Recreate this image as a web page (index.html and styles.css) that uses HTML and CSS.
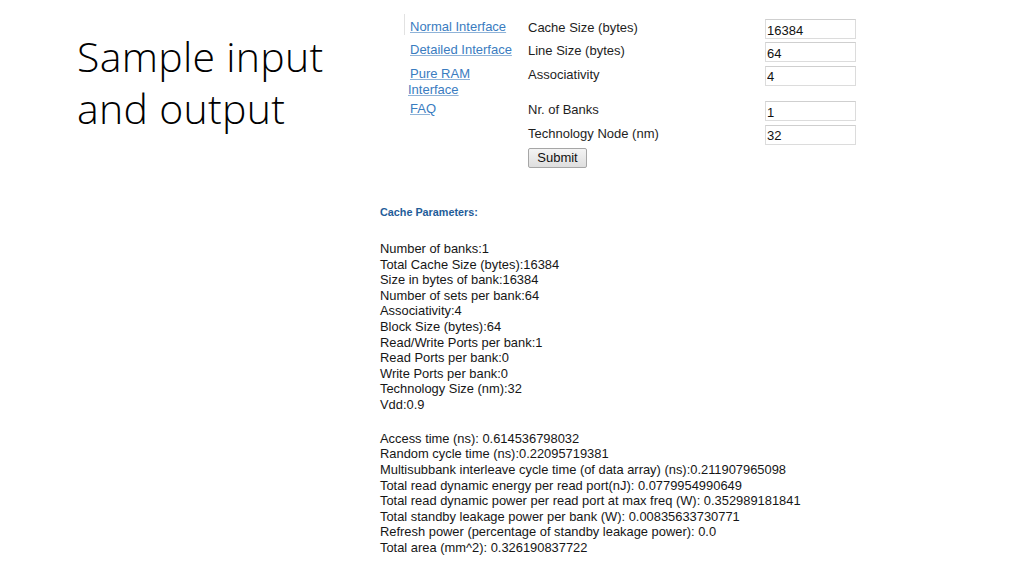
FILE: index.html
```html
<!DOCTYPE html>
<html>
<head>
<meta charset="utf-8">
<link rel="stylesheet" href="styles.css">
</head>
<body>
<div class="slide">
  <h1 class="title">Sample input<br>and output</h1>
  <div class="shot">
    <form class="form">
      <div class="nav first"><a href="#">Normal Interface</a></div>
      <div class="label">Cache Size (bytes)</div>
      <input class="field" type="text" value="16384">

      <div class="nav"><a href="#">Detailed Interface</a></div>
      <div class="label">Line Size (bytes)</div>
      <input class="field" type="text" value="64">

      <div class="nav"><a href="#">Pure RAM Interface</a></div>
      <div class="label">Associativity</div>
      <input class="field" type="text" value="4">

      <div class="nav"><a href="#">FAQ</a></div>
      <div class="label">Nr. of Banks</div>
      <input class="field" type="text" value="1">

      <div class="nav"></div>
      <div class="label">Technology Node (nm)</div>
      <input class="field" type="text" value="32">

      <div class="nav"></div>
      <div class="label"><button class="submit" type="button">Submit</button></div>
      <div></div>
    </form>

    <div class="output">
      <div class="heading">Cache Parameters:</div>
      <div class="block">
        <div>Number of banks:1</div>
        <div>Total Cache Size (bytes):16384</div>
        <div>Size in bytes of bank:16384</div>
        <div>Number of sets per bank:64</div>
        <div>Associativity:4</div>
        <div>Block Size (bytes):64</div>
        <div>Read/Write Ports per bank:1</div>
        <div>Read Ports per bank:0</div>
        <div>Write Ports per bank:0</div>
        <div>Technology Size (nm):32</div>
        <div>Vdd:0.9</div>
      </div>
      <div class="block results">
        <div>Access time (ns): 0.614536798032</div>
        <div>Random cycle time (ns):0.22095719381</div>
        <div>Multisubbank interleave cycle time (of data array) (ns):0.211907965098</div>
        <div>Total read dynamic energy per read port(nJ): 0.0779954990649</div>
        <div>Total read dynamic power per read port at max freq (W): 0.352989181841</div>
        <div>Total standby leakage power per bank (W): 0.00835633730771</div>
        <div>Refresh power (percentage of standby leakage power): 0.0</div>
        <div>Total area (mm^2): 0.326190837722</div>
      </div>
    </div>
  </div>
</div>
</body>
</html>
```
FILE: styles.css
```css
html, body {
  margin: 0;
  padding: 0;
  background: #ffffff;
}

.slide {
  width: 1024px;
  height: 576px;
  overflow: hidden;
  display: grid;
  grid-template-columns: 380px 1fr;
  background: #ffffff;
}

.title {
  margin: 0;
  padding: 30px 0 0 77px;
  font-family: "Open Sans", "Noto Sans", sans-serif;
  font-weight: 300;
  font-size: 41px;
  letter-spacing: 0.3px;
  line-height: 52px;
  color: #000000;
  align-self: start;
}

.shot {
  display: flex;
  flex-direction: column;
  font-family: "Liberation Sans", Arial, sans-serif;
  color: #222222;
}

.form {
  margin: 19px 0 0 24px;
  display: grid;
  grid-template-columns: 124px 237px 91px;
  row-gap: 3.4px;
  align-items: start;
  font-size: 13px;
  line-height: 16px;
}

.nav {
  border-left: 1px solid transparent;
  padding: 0 14px 0 3px;
  text-indent: 2px;
}

.nav.first {
  border-left-color: #e2e2e2;
  margin-top: -5px;
  padding-top: 5px;
}

.nav a {
  color: #3a7cbf;
  text-decoration: underline;
  text-decoration-color: #8fb3d8;
}

.label {
  color: #1e1e1e;
  padding-top: 1px;
}

.field {
  box-sizing: border-box;
  width: 91px;
  height: 20px;
  margin: 0;
  padding: 2px 1px 0 1px;
  border: 1px solid #dcdcdc;
  border-top-color: #cfcfcf;
  font-family: "Liberation Sans", Arial, sans-serif;
  font-size: 13px;
  color: #111111;
  background: #ffffff;
  outline: none;
}

.submit {
  box-sizing: border-box;
  width: 59px;
  height: 20px;
  margin: -1px 0 0 0;
  padding: 0;
  border: 1px solid #a6a6a6;
  border-radius: 2px;
  background: linear-gradient(#f4f4f4, #dedede);
  font-family: "Liberation Sans", Arial, sans-serif;
  font-size: 13px;
  color: #111111;
}

.output {
  margin-top: 37px;
}

.heading {
  font-size: 10.8px;
  font-weight: bold;
  line-height: 15px;
  color: #1f5d99;
  margin-bottom: 21px;
}

.block {
  font-size: 12.9px;
  line-height: 15.6px;
  color: #161616;
}

.results {
  margin-top: 18.4px;
}
```
